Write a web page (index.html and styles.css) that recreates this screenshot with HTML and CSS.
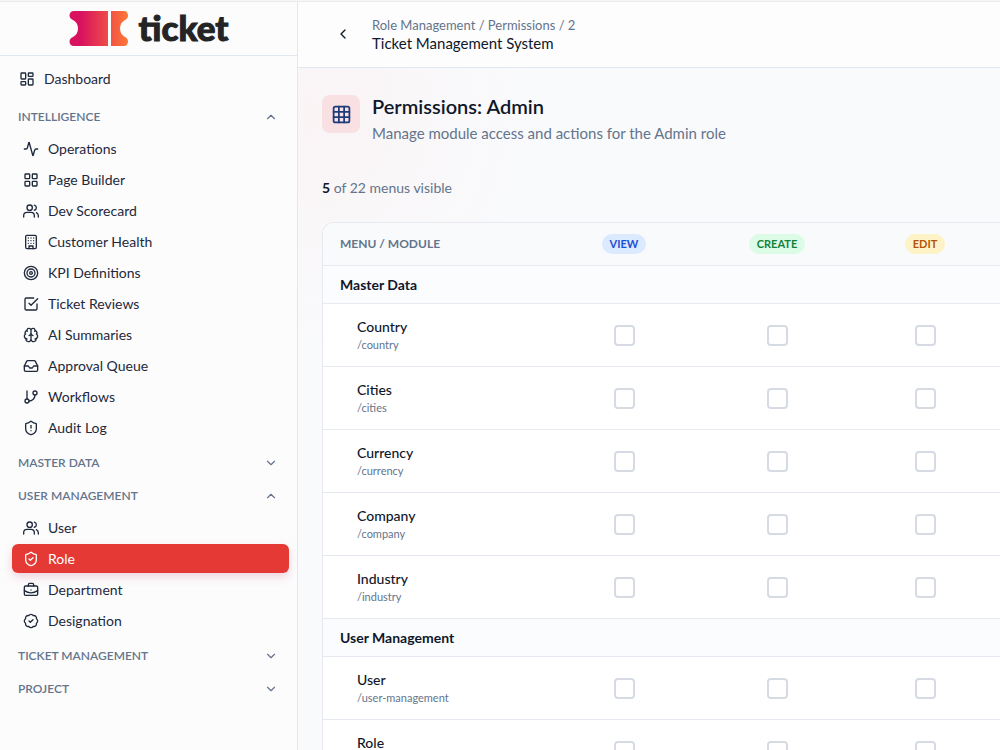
FILE: index.html
```html
<!DOCTYPE html>
<html lang="en">
<head>
  <meta charset="UTF-8">
  <title>Ticket Management System</title>
  <meta name="viewport" content="width=device-width, initial-scale=1">
  <link rel="stylesheet" href="styles.css">
</head>
<body>

  <!-- Icon sprite -->
  <svg class="sprite" aria-hidden="true">
    <symbol id="i-dashboard" viewBox="0 0 24 24"><rect x="3" y="3" width="7" height="9" rx="1"/><rect x="14" y="3" width="7" height="5" rx="1"/><rect x="14" y="12" width="7" height="9" rx="1"/><rect x="3" y="16" width="7" height="5" rx="1"/></symbol>
    <symbol id="i-activity" viewBox="0 0 24 24"><path d="M22 12h-2.5a2 2 0 0 0-1.9 1.5l-2.4 8.3a.25.25 0 0 1-.5 0L9.300 2.200a.25.25 0 0 0-.5 0l-2.300 8.300A2 2 0 0 1 4.500 12H2"/></symbol>
    <symbol id="i-grid" viewBox="0 0 24 24"><rect x="3" y="3" width="7" height="7" rx="1"/><rect x="14" y="3" width="7" height="7" rx="1"/><rect x="14" y="14" width="7" height="7" rx="1"/><rect x="3" y="14" width="7" height="7" rx="1"/></symbol>
    <symbol id="i-users" viewBox="0 0 24 24"><path d="M17 21v-2a5 5 0 0 0-5-5H6a5 5 0 0 0-5 5v2"/><circle cx="10" cy="7" r="4"/><path d="M23 21v-2a5 5 0 0 0-3-4.500M17 3.130a4 4 0 0 1 0 7.750"/></symbol>
    <symbol id="i-building" viewBox="0 0 24 24"><rect x="4" y="2" width="16" height="20" rx="2"/><path d="M9 22v-4h6v4M8 6h.01M16 6h.01M12 6h.01M12 10h.01M12 14h.01M16 10h.01M16 14h.01M8 10h.01M8 14h.01"/></symbol>
    <symbol id="i-target" viewBox="0 0 24 24"><circle cx="12" cy="12" r="10"/><circle cx="12" cy="12" r="6"/><circle cx="12" cy="12" r="2"/></symbol>
    <symbol id="i-check" viewBox="0 0 24 24"><path d="m9 11 3 3L22 4"/><path d="M21 12v7a2 2 0 0 1-2 2H5a2 2 0 0 1-2-2V5a2 2 0 0 1 2-2h11"/></symbol>
    <symbol id="i-brain" viewBox="0 0 24 24"><path d="M12 18V5M15 13a4.170 4.170 0 0 1-3-4 4.170 4.170 0 0 1-3 4M17.600 6.500A3 3 0 1 0 12 5a3 3 0 1 0-5.600 1.500M18 5.130a4 4 0 0 1 2.530 5.770M18 18a4 4 0 0 0 2-7.460M19.970 17.480A4 4 0 1 1 12 18a4 4 0 1 1-7.970-.52M6 18a4 4 0 0 1-2-7.460M6 5.130a4 4 0 0 0-2.530 5.770"/></symbol>
    <symbol id="i-inbox" viewBox="0 0 24 24"><path d="M22 12h-6l-2 3h-4l-2-3H2"/><path d="M5.450 5.110 2 12v6a2 2 0 0 0 2 2h16a2 2 0 0 0 2-2v-6l-3.450-6.890A2 2 0 0 0 16.760 4H7.240a2 2 0 0 0-1.790 1.110z"/></symbol>
    <symbol id="i-branch" viewBox="0 0 24 24"><path d="M6 3v12"/><circle cx="18" cy="6" r="3"/><circle cx="6" cy="18" r="3"/><path d="M18 9a9 9 0 0 1-9 9"/></symbol>
    <symbol id="i-shield-alert" viewBox="0 0 24 24"><path d="M20 13c0 5-3.500 7.500-7.660 8.950a1 1 0 0 1-.67-.01C7.500 20.500 4 18 4 13V6a1 1 0 0 1 1-1c2 0 4.500-1.200 6.240-2.720a1.170 1.170 0 0 1 1.520 0C14.510 3.810 17 5 19 5a1 1 0 0 1 1 1z"/><path d="M12 8v4M12 16h.01"/></symbol>
    <symbol id="i-shield-check" viewBox="0 0 24 24"><path d="M20 13c0 5-3.500 7.500-7.660 8.950a1 1 0 0 1-.67-.01C7.500 20.500 4 18 4 13V6a1 1 0 0 1 1-1c2 0 4.500-1.200 6.240-2.720a1.170 1.170 0 0 1 1.520 0C14.510 3.810 17 5 19 5a1 1 0 0 1 1 1z"/><path d="m9 12 2 2 4-4"/></symbol>
    <symbol id="i-briefcase" viewBox="0 0 24 24"><path d="M12 12h.01M16 6V4a2 2 0 0 0-2-2h-4a2 2 0 0 0-2 2v2M22 13a18.150 18.150 0 0 1-20 0"/><rect x="2" y="6" width="20" height="14" rx="2"/></symbol>
    <symbol id="i-badge" viewBox="0 0 24 24"><path d="M3.850 8.620a4 4 0 0 1 4.780-4.770 4 4 0 0 1 6.740 0 4 4 0 0 1 4.780 4.780 4 4 0 0 1 0 6.740 4 4 0 0 1-4.770 4.780 4 4 0 0 1-6.750 0 4 4 0 0 1-4.780-4.770 4 4 0 0 1 0-6.760Z"/><path d="m9 12 2 2 4-4"/></symbol>
    <symbol id="i-up" viewBox="0 0 24 24"><path d="m18 15-6-6-6 6"/></symbol>
    <symbol id="i-down" viewBox="0 0 24 24"><path d="m6 9 6 6 6-6"/></symbol>
    <symbol id="i-left" viewBox="0 0 24 24"><path d="m15 18-6-6 6-6"/></symbol>
    <symbol id="i-table" viewBox="0 0 24 24"><rect x="3" y="3" width="18" height="18" rx="2"/><path d="M3 9h18M3 15h18M9 3v18M15 3v18"/></symbol>
  </svg>

  <div class="app">
    <aside class="sidebar">
      <div class="brand">
        <svg class="brand-mark" viewBox="0 0 60 36" aria-hidden="true">
          <defs>
            <linearGradient id="brand-fill" gradientUnits="userSpaceOnUse" x1="0" y1="0" x2="60" y2="0">
              <stop offset="0.2" stop-color="#d8125f"/>
              <stop offset="1" stop-color="#ff7a35"/>
            </linearGradient>
          </defs>
          <path fill="url(#brand-fill)" d="M5 0H39V35H5C2 35 0.500 33 0.500 30.500C0.500 28 2 27 4 26C7 24.500 9 21.500 9 17.500C9 13.500 7 10.500 4 9C2 8 0.500 7 0.500 4.500C0.500 2 2 0 5 0Z"/>
          <path fill="url(#brand-fill)" d="M42 0H55C57.500 0 59 2 59 4.500C59 7 58 8 56 9C53 10.500 51 13.500 51 17.500C51 21.500 53 24.500 56 26C58 27 59 28 59 30.500C59 33 57.500 35 55 35H42Z"/>
        </svg>
        <span class="brand-name">ticket</span>
      </div>

      <nav class="nav">
        <a class="nav-link nav-top" href="#"><svg class="icon"><use href="#i-dashboard"/></svg>Dashboard</a>

        <button class="nav-group" type="button" aria-expanded="true">INTELLIGENCE<svg class="icon chevron"><use href="#i-up"/></svg></button>
        <div class="nav-list">
          <a class="nav-link" href="#"><svg class="icon"><use href="#i-activity"/></svg>Operations</a>
          <a class="nav-link" href="#"><svg class="icon"><use href="#i-grid"/></svg>Page Builder</a>
          <a class="nav-link" href="#"><svg class="icon"><use href="#i-users"/></svg>Dev Scorecard</a>
          <a class="nav-link" href="#"><svg class="icon"><use href="#i-building"/></svg>Customer Health</a>
          <a class="nav-link" href="#"><svg class="icon"><use href="#i-target"/></svg>KPI Definitions</a>
          <a class="nav-link" href="#"><svg class="icon"><use href="#i-check"/></svg>Ticket Reviews</a>
          <a class="nav-link" href="#"><svg class="icon"><use href="#i-brain"/></svg>AI Summaries</a>
          <a class="nav-link" href="#"><svg class="icon"><use href="#i-inbox"/></svg>Approval Queue</a>
          <a class="nav-link" href="#"><svg class="icon"><use href="#i-branch"/></svg>Workflows</a>
          <a class="nav-link" href="#"><svg class="icon"><use href="#i-shield-alert"/></svg>Audit Log</a>
        </div>

        <button class="nav-group" type="button" aria-expanded="false">MASTER DATA<svg class="icon chevron"><use href="#i-down"/></svg></button>

        <button class="nav-group" type="button" aria-expanded="true">USER MANAGEMENT<svg class="icon chevron"><use href="#i-up"/></svg></button>
        <div class="nav-list">
          <a class="nav-link" href="#"><svg class="icon"><use href="#i-users"/></svg>User</a>
          <a class="nav-link active" href="#" aria-current="page"><svg class="icon"><use href="#i-shield-check"/></svg>Role</a>
          <a class="nav-link" href="#"><svg class="icon"><use href="#i-briefcase"/></svg>Department</a>
          <a class="nav-link" href="#"><svg class="icon"><use href="#i-badge"/></svg>Designation</a>
        </div>

        <button class="nav-group" type="button" aria-expanded="false">TICKET MANAGEMENT<svg class="icon chevron"><use href="#i-down"/></svg></button>
        <button class="nav-group" type="button" aria-expanded="false">PROJECT<svg class="icon chevron"><use href="#i-down"/></svg></button>
      </nav>
    </aside>

    <div class="main">
      <header class="topbar">
        <button class="back" type="button"><svg class="icon"><use href="#i-left"/></svg></button>
        <div>
          <div class="crumbs">Role Management / Permissions / 2</div>
          <div class="app-title">Ticket Management System</div>
        </div>
      </header>

      <main class="content">
        <div class="page-head">
          <div class="page-icon"><svg class="icon"><use href="#i-table"/></svg></div>
          <div>
            <h1>Permissions: Admin</h1>
            <p class="subtitle">Manage module access and actions for the Admin role</p>
          </div>
        </div>

        <p class="count"><strong>5</strong> of 22 menus visible</p>

        <div class="card">
          <table class="perms">
            <colgroup>
              <col>
              <col class="col-view">
              <col class="col-create">
              <col class="col-edit">
            </colgroup>
            <thead>
              <tr>
                <th id="h-menu">MENU / MODULE</th>
                <th id="h-view"><span class="pill pill-view">VIEW</span></th>
                <th id="h-create"><span class="pill pill-create">CREATE</span></th>
                <th id="h-edit"><span class="pill pill-edit">EDIT</span></th>
              </tr>
            </thead>
            <tbody>
              <tr class="section"><td colspan="4">Master Data</td></tr>
              <tr>
                <td><div class="menu-name" id="m-country">Country</div><div class="menu-path">/country</div></td>
                <td><input type="checkbox" aria-labelledby="m-country h-view"></td>
                <td><input type="checkbox" aria-labelledby="m-country h-create"></td>
                <td><input type="checkbox" aria-labelledby="m-country h-edit"></td>
              </tr>
              <tr>
                <td><div class="menu-name" id="m-cities">Cities</div><div class="menu-path">/cities</div></td>
                <td><input type="checkbox" aria-labelledby="m-cities h-view"></td>
                <td><input type="checkbox" aria-labelledby="m-cities h-create"></td>
                <td><input type="checkbox" aria-labelledby="m-cities h-edit"></td>
              </tr>
              <tr>
                <td><div class="menu-name" id="m-currency">Currency</div><div class="menu-path">/currency</div></td>
                <td><input type="checkbox" aria-labelledby="m-currency h-view"></td>
                <td><input type="checkbox" aria-labelledby="m-currency h-create"></td>
                <td><input type="checkbox" aria-labelledby="m-currency h-edit"></td>
              </tr>
              <tr>
                <td><div class="menu-name" id="m-company">Company</div><div class="menu-path">/company</div></td>
                <td><input type="checkbox" aria-labelledby="m-company h-view"></td>
                <td><input type="checkbox" aria-labelledby="m-company h-create"></td>
                <td><input type="checkbox" aria-labelledby="m-company h-edit"></td>
              </tr>
              <tr>
                <td><div class="menu-name" id="m-industry">Industry</div><div class="menu-path">/industry</div></td>
                <td><input type="checkbox" aria-labelledby="m-industry h-view"></td>
                <td><input type="checkbox" aria-labelledby="m-industry h-create"></td>
                <td><input type="checkbox" aria-labelledby="m-industry h-edit"></td>
              </tr>
              <tr class="section"><td colspan="4">User Management</td></tr>
              <tr>
                <td><div class="menu-name" id="m-user">User</div><div class="menu-path">/user-management</div></td>
                <td><input type="checkbox" aria-labelledby="m-user h-view"></td>
                <td><input type="checkbox" aria-labelledby="m-user h-create"></td>
                <td><input type="checkbox" aria-labelledby="m-user h-edit"></td>
              </tr>
              <tr>
                <td><div class="menu-name" id="m-role">Role</div><div class="menu-path">/role</div></td>
                <td><input type="checkbox" aria-labelledby="m-role h-view"></td>
                <td><input type="checkbox" aria-labelledby="m-role h-create"></td>
                <td><input type="checkbox" aria-labelledby="m-role h-edit"></td>
              </tr>
            </tbody>
          </table>
        </div>
      </main>
    </div>
  </div>

</body>
</html>
```
FILE: styles.css
```css
* {
  box-sizing: border-box;
}

body {
  margin: 0;
  font-family: Lato, "Open Sans", sans-serif;
  font-size: 14px;
  line-height: 20px;
  color: #0f172a;
  background: #f9fafc;
}

h1, p {
  margin: 0;
}

button {
  font-family: inherit;
  border: none;
  background: none;
  cursor: pointer;
}

.sprite {
  display: none;
}

.icon {
  width: 16px;
  height: 16px;
  flex: none;
  fill: none;
  stroke: currentColor;
  stroke-width: 2;
  stroke-linecap: round;
  stroke-linejoin: round;
}

.app {
  display: flex;
  height: 100vh;
  overflow: hidden;
  border-top: 1px solid #f6f6f4;
}

/* Sidebar */
.sidebar {
  width: 298px;
  flex: none;
  background: #fcfcfd;
  border-right: 1px solid #e2e8f0;
  border-top: 1px solid #e9ebef;
}

.brand {
  display: flex;
  align-items: center;
  justify-content: center;
  gap: 10px;
  height: 54px;
  border-bottom: 1px solid #e2e8f0;
}

.brand-mark {
  width: 60px;
  height: 36px;
}

.brand-name {
  padding-bottom: 4px;
  font-size: 35px;
  line-height: 36px;
  font-weight: 900;
  color: #242424;
  -webkit-text-stroke: 1px #242424;
}

.nav {
  padding: 8px 8px 8px 12px;
}

.nav-link {
  display: flex;
  align-items: center;
  gap: 9px;
  height: 29px;
  padding: 0 11px;
  border-radius: 6px;
  color: #1e293b;
  text-decoration: none;
}

.nav-top {
  padding: 0 7px;
  margin-bottom: 7px;
}

.nav-list {
  display: flex;
  flex-direction: column;
  gap: 2px;
  padding: 1px 0 4px;
}

.nav-link.active {
  color: #fff;
  background: #e53935;
  box-shadow: 0 4px 10px rgba(190, 50, 90, 0.2);
}

.nav-group {
  display: flex;
  align-items: center;
  justify-content: space-between;
  width: 100%;
  height: 33px;
  padding: 0 11px 0 6px;
  font-size: 12px;
  font-weight: 600;
  color: #64748b;
}

.chevron {
  width: 14px;
  height: 14px;
}

/* Main area */
.main {
  flex: 1;
  min-width: 0;
  border-top: 1px solid #e9ebef;
  background: radial-gradient(circle at 0 15%, #faf4f5 0, #f9fafc 240px);
}

.topbar {
  display: flex;
  align-items: center;
  gap: 15px;
  height: 66px;
  padding: 0 30px 2px;
  background: #fdfdfe;
  border-bottom: 1px solid #e2e8f0;
}

.back {
  display: flex;
  align-items: center;
  justify-content: center;
  width: 29px;
  height: 29px;
  padding: 0;
  color: #0f172a;
}

.crumbs {
  font-size: 13px;
  line-height: 18px;
  color: #64748b;
}

.app-title {
  font-size: 15px;
  line-height: 18px;
}

.content {
  padding: 27px 0 0 24px;
}

.page-head {
  display: flex;
  gap: 12px;
}

.page-icon {
  display: flex;
  align-items: center;
  justify-content: center;
  width: 38px;
  height: 38px;
  border-radius: 8px;
  color: #1e3a7a;
  background: #f9e0e2;
}

.page-icon .icon {
  width: 21px;
  height: 21px;
}

h1 {
  font-size: 20px;
  line-height: 22px;
  font-weight: 600;
}

.subtitle {
  padding-top: 6px;
  font-size: 15px;
  color: #64748b;
}

.count {
  padding: 35px 0 24px;
  color: #64748b;
}

.count strong {
  color: #0f172a;
}

/* Permissions table */
.card {
  border: 1px solid #e6e9f0;
  border-right: none;
  border-radius: 12px 0 0 0;
  background: #fff;
  overflow: hidden;
}

.perms {
  width: 100%;
  table-layout: fixed;
  border-collapse: separate;
  border-spacing: 0;
}

.col-view {
  width: 160px;
}

.col-create {
  width: 146px;
}

.col-edit {
  width: 150px;
}

.perms th,
.perms td {
  height: 63px;
  padding: 0;
  text-align: center;
  vertical-align: middle;
  border-bottom: 1px solid #e6e9f0;
}

.perms th {
  height: 43px;
  font-size: 12px;
  font-weight: 700;
  color: #64748b;
  background: #f8fafc;
}

.perms th:first-child {
  padding-left: 17px;
  text-align: left;
}

.perms td:first-child {
  padding-left: 34px;
  text-align: left;
}

.perms .section td {
  height: 38px;
  padding-left: 17px;
  font-weight: 700;
  background: #fbfcfe;
}

.pill {
  display: inline-block;
  padding: 0 8px;
  border-radius: 10px;
  font-size: 11px;
  line-height: 20px;
}

.pill-view {
  color: #1d4ed8;
  background: #dbeafe;
}

.pill-create {
  color: #15803d;
  background: #dcfce7;
}

.pill-edit {
  color: #b45309;
  background: #fef3c7;
}

.menu-name {
  font-weight: 500;
}

.menu-path {
  font-size: 11px;
  line-height: 16px;
  color: #64748b;
}

.perms input {
  appearance: none;
  display: block;
  width: 21px;
  height: 21px;
  margin: 0 auto;
  border: 2px solid #d6dae2;
  border-radius: 4px;
  background: #fff;
}

.perms input:checked {
  border-color: #e53935;
  background: #e53935;
}
```
